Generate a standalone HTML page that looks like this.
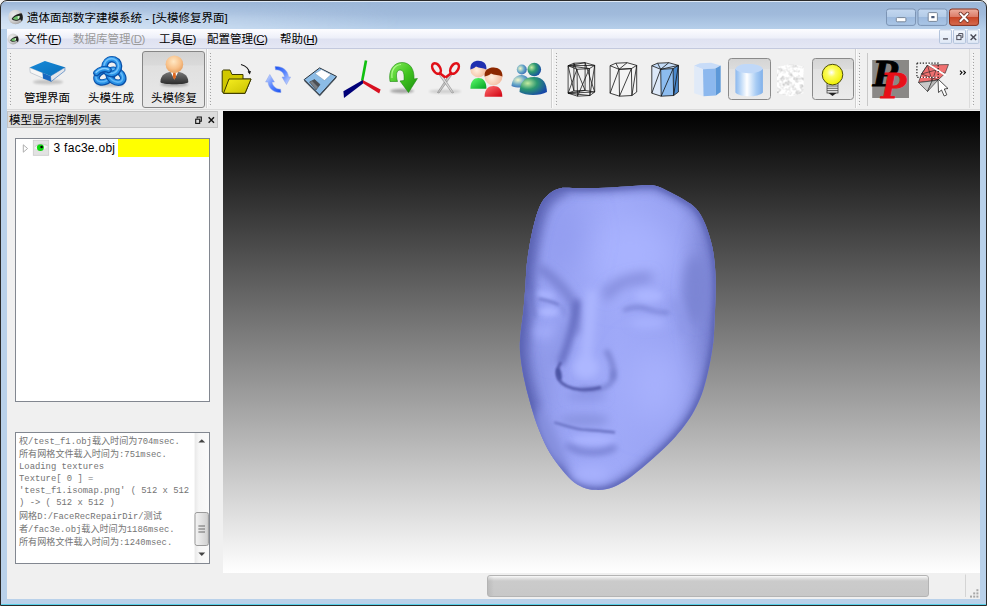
<!DOCTYPE html>
<html lang="zh-CN">
<head>
<meta charset="utf-8">
<title>遗体面部数字建模系统 - [头模修复界面]</title>
<style>
html,body{margin:0;padding:0;}
body{width:987px;height:606px;overflow:hidden;position:relative;background:#000;
  font-family:"Liberation Sans","Noto Sans CJK SC",sans-serif;font-size:11.5px;color:#000;}
.abs{position:absolute;}
#win{position:absolute;left:0;top:0;width:987px;height:606px;background:#f2f2f2;overflow:hidden;}
#frame{position:absolute;left:0;top:0;width:985px;height:604px;border:1px solid #2a2a2a;border-radius:7px 7px 0 0;
  background:linear-gradient(#dfe9f5 0,#dfe9f5 1px,#9cb7d8 1px,#a0badb 13px,#b6cfea 28px,#b9d1ea 48px);}
#frame:before{content:"";position:absolute;left:0;top:1px;width:420px;height:27px;
  background:linear-gradient(rgba(212,227,244,0) 0,rgba(212,227,244,.35) 8px,rgba(212,227,244,.8) 16px,rgba(214,229,245,1) 27px);-webkit-mask-image:linear-gradient(90deg,#000 0,#000 60px,transparent 400px);mask-image:linear-gradient(90deg,#000 0,#000 60px,transparent 400px);}
#frame:after{content:"";position:absolute;left:0;bottom:0;width:985px;height:1px;background:#58d0e8;}
#title{position:absolute;left:27px;top:10px;line-height:17px;font-size:11.5px;white-space:nowrap;color:#000;}
#menubar{position:absolute;left:7px;top:29px;width:973px;height:19px;background:linear-gradient(#fdfdff 0,#eef0f9 45%,#dfe2f1 55%,#e4e7f4 100%);border-bottom:1px solid #c3c9dd;}
.mi{position:absolute;top:30px;line-height:19px;white-space:nowrap;font-size:11.5px;}
.mi u{text-decoration:underline;}
.pa{letter-spacing:-0.55px;}
#client{position:absolute;left:7px;top:49px;width:973px;height:550px;background:#f0f0f0;}
#toolbar{position:absolute;left:7px;top:49px;width:973px;height:60px;background:#f0f0f0;border-bottom:1px solid #dadada;}
.tlabel{position:absolute;top:90.7px;line-height:15px;font-size:11.5px;white-space:nowrap;}
.handle{position:absolute;top:53px;width:1px;height:53px;background:repeating-linear-gradient(#a4a4a4 0 1px,transparent 1px 3px);}
.handle:after{content:"";position:absolute;left:-1px;top:1px;width:1px;height:53px;background:repeating-linear-gradient(#fafafa 0 1px,transparent 1px 3px);}
.pressed{position:absolute;border:1px solid #868686;border-radius:3px;background:linear-gradient(#d2d2d2 0,#dadada 24%,#e0e0e0 25%,#e9e9e9 100%);box-sizing:border-box;}
#docktitle{position:absolute;left:7px;top:111px;width:211px;height:17px;background:#dcdcdc;border:1px solid #c4c4c4;box-sizing:border-box;}
#docktitle span{position:absolute;left:1px;top:1px;line-height:15px;font-size:11.5px;white-space:nowrap;}
#tree{position:absolute;left:15px;top:138px;width:195px;height:264px;background:#fff;border:1px solid #828790;box-sizing:border-box;}
#log{position:absolute;left:15px;top:432px;width:195px;height:132px;background:#fff;border:1px solid #828790;box-sizing:border-box;overflow:hidden;}
.ll{position:absolute;left:19px;line-height:12px;height:12px;font-family:"Liberation Mono","Noto Sans CJK SC",monospace;font-size:8.87px;color:#747474;white-space:pre;}
.ll i{font-style:normal;font-size:9.1px;}
#treerow{position:absolute;left:53.5px;top:139px;line-height:18px;font-size:12px;letter-spacing:0.28px;white-space:nowrap;}
#yellow{position:absolute;left:118px;top:139px;width:91px;height:18px;background:#ffff00;}
#view{position:absolute;left:223px;top:111px;width:757px;height:462px;background:linear-gradient(#000 0%,#fff 100%);overflow:hidden;}
#status{position:absolute;left:7px;top:573px;width:973px;height:26px;background:#f0f0f0;}
#progress{position:absolute;left:487px;top:575px;width:442px;height:22px;box-sizing:border-box;border:1px solid #b4b4b4;border-radius:3px;background:linear-gradient(90deg,rgba(0,0,0,.07) 0,rgba(0,0,0,0) 6px),linear-gradient(#fafafa 0,#e4e4e4 2px,#cbcbcb 5px,#c8c8c8 100%);}
</style>
</head>
<body>
<div id="win">
  <div id="frame"></div>
  <div id="title">遗体面部数字建模系统 - [头模修复界面]</div>
  <div id="menubar"></div>
  <div class="mi" style="left:25px">文件<span class="pa">(<u>F</u>)</span></div>
  <div class="mi" style="left:73px;color:#9a9a9a">数据库管理<span class="pa">(<u>D</u>)</span></div>
  <div class="mi" style="left:159px">工具<span class="pa">(<u>E</u>)</span></div>
  <div class="mi" style="left:207px">配置管理<span class="pa">(<u>C</u>)</span></div>
  <div class="mi" style="left:280px">帮助<span class="pa">(<u>H</u>)</span></div>
  <!--CHR--><svg class="abs" style="left:0;top:0" width="987" height="49" viewBox="0 0 987 49">
<defs>
<linearGradient id="gcb" x1="0" y1="0" x2="0" y2="1"><stop offset="0" stop-color="#c4d8f0"/><stop offset="0.48" stop-color="#b4cce8"/><stop offset="0.5" stop-color="#9dbade"/><stop offset="1" stop-color="#aac6e6"/></linearGradient>
<linearGradient id="gcr" x1="0" y1="0" x2="0" y2="1"><stop offset="0" stop-color="#eeb0a0"/><stop offset="0.48" stop-color="#dc7c68"/><stop offset="0.5" stop-color="#c84424"/><stop offset="1" stop-color="#d66c50"/></linearGradient>
<radialGradient id="geyebg" cx="0.35" cy="0.35" r="0.75"><stop offset="0" stop-color="#ececec"/><stop offset="0.6" stop-color="#cfcfcf"/><stop offset="1" stop-color="#9a9a9a"/></radialGradient>
<linearGradient id="gmdi" x1="0" y1="0" x2="0" y2="1"><stop offset="0" stop-color="#f4f8fd"/><stop offset="1" stop-color="#dfe8f6"/></linearGradient>
</defs>
<!-- title icon -->
<g id="eyeicon">
<circle cx="15.6" cy="17" r="7.3" fill="url(#geyebg)"/>
<path d="M11.6,19 C13,16 17,13.6 21.6,13.2 C23.2,15.5 23.3,19.5 21.8,21.8 C21.6,20.5 21,19.6 20,19.4 C17.5,21.2 13.6,21.2 11.6,19Z" fill="#1e1e1e"/>
<path d="M12.8,18.8 C14.2,16.8 17,15.6 19.6,15.8 C19.8,17.4 19.2,18.8 18.2,19.6 C16.4,20.2 14.2,19.9 12.8,18.8Z" fill="#6cbc68"/>
<path d="M17.8,16.2 C18.6,16 19.2,16 19.6,16.2 C19.6,17.4 19.2,18.4 18.4,19.2 C17.6,18.4 17.4,17.2 17.8,16.2Z" fill="#d8ecd4"/>
</g>
<!-- caption buttons -->
<rect x="886.5" y="9" width="29" height="16.4" rx="2.5" fill="url(#gcb)" stroke="#7c94b4" stroke-width="1"/>
<rect x="896.3" y="17.6" width="9.6" height="4.2" rx="1" fill="#fff" stroke="#6c7c90" stroke-width="0.9"/>
<rect x="918" y="9" width="29" height="16.4" rx="2.5" fill="url(#gcb)" stroke="#7c94b4" stroke-width="1"/>
<rect x="928.2" y="12.6" width="9.2" height="8.8" rx="1" fill="#fff" stroke="#6c7c90" stroke-width="0.9"/>
<rect x="931.3" y="16" width="3.2" height="2.2" fill="#4a5a78"/>
<rect x="949.5" y="9" width="29" height="16.4" rx="2.5" fill="url(#gcr)" stroke="#86301c" stroke-width="1"/>
<path d="M960.4,13.6 L967.6,21 M967.6,13.6 L960.4,21" stroke="#74382c" stroke-width="3.6" stroke-linecap="round"/>
<path d="M960.4,13.6 L967.6,21 M967.6,13.6 L960.4,21" stroke="#fff" stroke-width="2" stroke-linecap="round"/>
<!-- MDI buttons -->
<rect x="939.5" y="29.8" width="12" height="13.6" rx="1" fill="url(#gmdi)" stroke="#b4c4dc" stroke-width="1"/>
<rect x="953.5" y="29.8" width="12" height="13.6" rx="1" fill="url(#gmdi)" stroke="#b4c4dc" stroke-width="1"/>
<rect x="967.2" y="29.8" width="11.6" height="13.6" rx="1" fill="url(#gmdi)" stroke="#b4c4dc" stroke-width="1"/>
<path d="M943,38.9 H948" stroke="#4a4a55" stroke-width="1.3"/>
<path d="M958.8,35.2 V33.6 H962.8 V37.4 H961.4" fill="none" stroke="#4a4a55" stroke-width="1"/>
<rect x="956.8" y="35.6" width="4.2" height="4" fill="none" stroke="#4a4a55" stroke-width="1"/>
<path d="M970.6,34.4 L976.2,40 M976.2,34.4 L970.6,40" stroke="#4a4a55" stroke-width="1.4"/>
<!-- menu icon -->
<g transform="translate(1.4,26.25) scale(0.75)"><use href="#eyeicon"/></g>
</svg>
<!--/CHR-->
  <div id="client"></div>
  <div id="toolbar"></div>
  <div class="handle" style="left:10px"></div>
  <div class="handle" style="left:210px"></div>
  <div class="handle" style="left:556px"></div>
  <div class="handle" style="left:859px"></div>
  <div class="handle" style="left:973px"></div>
  <div class="pressed" style="left:142px;top:51px;width:63px;height:57px"></div>
  <!--IC1--><svg class="abs" style="left:0;top:49px" width="987" height="60" viewBox="0 49 987 60">
<defs>
<filter id="ib1" x="-30%" y="-30%" width="160%" height="160%"><feGaussianBlur stdDeviation="1"/></filter>
<filter id="ib2" x="-30%" y="-30%" width="160%" height="160%"><feGaussianBlur stdDeviation="0.6"/></filter>
<linearGradient id="gbook" x1="0" y1="0" x2="1" y2="1"><stop offset="0" stop-color="#1a8ad8"/><stop offset="1" stop-color="#0870bc"/></linearGradient>
<radialGradient id="ghead" cx="0.45" cy="0.35" r="0.7"><stop offset="0" stop-color="#ffe8c4"/><stop offset="0.6" stop-color="#f8c088"/><stop offset="1" stop-color="#e09858"/></radialGradient>
<linearGradient id="gsuit" x1="0" y1="0" x2="0" y2="1"><stop offset="0" stop-color="#7a7a7a"/><stop offset="1" stop-color="#2c2c2c"/></linearGradient>
<linearGradient id="gknot" x1="0" y1="0" x2="1" y2="1"><stop offset="0" stop-color="#48b0f4"/><stop offset="1" stop-color="#0c5cb4"/></linearGradient>
</defs>
<!-- book -->
<ellipse cx="48" cy="82" rx="15" ry="2.5" fill="#000" opacity="0.18" filter="url(#ib1)"/>
<polygon points="29.7,67.6 50.5,76 51,81.6 30.3,72.6" fill="#f6f6f6" stroke="#9aa6b4" stroke-width="0.5"/>
<polygon points="50.5,76 64.9,67.3 64.9,70.8 51,81.6" fill="#e4e6ea" stroke="#2a6cb8" stroke-width="0.6"/>
<polygon points="42.5,72.8 50.5,76 51,81.6 43,78.4" fill="#1868c0"/>
<polygon points="29.7,67.6 44.9,61 64.9,67.3 50.5,76" fill="url(#gbook)"/>
<!-- trefoil knot -->
<ellipse cx="110" cy="85" rx="14" ry="1.8" fill="#000" opacity="0.2" filter="url(#ib1)"/>
<g fill="none" stroke-linecap="round">
  <ellipse cx="104.5" cy="76.3" rx="8.4" ry="5.6" stroke="#0a50a8" stroke-width="6.6" transform="rotate(-25 104.5 76.3)"/>
  <ellipse cx="104.3" cy="76" rx="8.4" ry="5.6" stroke="#2890e4" stroke-width="4.4" transform="rotate(-25 104.3 76)"/>
  <ellipse cx="104" cy="75.6" rx="8.4" ry="5.6" stroke="#62b8f8" stroke-width="1.6" transform="rotate(-25 104 75.6)"/>
  <ellipse cx="116" cy="76.3" rx="8" ry="5.6" stroke="#0a50a8" stroke-width="6.6" transform="rotate(35 116 76.3)"/>
  <ellipse cx="115.8" cy="76" rx="8" ry="5.6" stroke="#2890e4" stroke-width="4.4" transform="rotate(35 115.8 76)"/>
  <ellipse cx="115.5" cy="75.6" rx="8" ry="5.6" stroke="#62b8f8" stroke-width="1.6" transform="rotate(35 115.5 75.6)"/>
  <ellipse cx="111.8" cy="66.6" rx="7.2" ry="7.4" stroke="#0a50a8" stroke-width="6.6" transform="rotate(20 111.8 66.6)"/>
  <ellipse cx="111.6" cy="66.3" rx="7.2" ry="7.4" stroke="#2c94e8" stroke-width="4.4" transform="rotate(20 111.6 66.3)"/>
  <ellipse cx="111.3" cy="66" rx="7.2" ry="7.4" stroke="#70c0fa" stroke-width="1.6" transform="rotate(20 111.3 66)"/>
  <path d="M96.5,73 A8.4,5.6 -25 0 1 108.5,70" stroke="#0a50a8" stroke-width="6.6"/>
  <path d="M96.4,72.7 A8.4,5.6 -25 0 1 108.4,69.7" stroke="#2890e4" stroke-width="4.4"/>
  <path d="M96.2,72.3 A8.4,5.6 -25 0 1 108.2,69.3" stroke="#8cd0ff" stroke-width="1.6"/>
</g>
<!-- person -->
<ellipse cx="174.4" cy="84.5" rx="14" ry="2" fill="#000" opacity="0.25" filter="url(#ib1)"/>
<path d="M160.4,82 C160.4,75 166,71.5 174.4,71.5 C182.8,71.5 188.3,75 188.3,82 C188.3,85 160.4,85 160.4,82Z" fill="url(#gsuit)"/>
<polygon points="170.5,71.8 178.3,71.8 174.4,79.5" fill="#fff"/>
<polygon points="173.2,72.5 175.6,72.5 176,77 174.4,79.8 172.8,77" fill="#e06820"/>
<circle cx="174.4" cy="64.2" r="8.8" fill="url(#ghead)"/>
</svg>
<!--/IC1-->
<!--IC2--><svg class="abs" style="left:0;top:49px" width="987" height="60" viewBox="0 49 987 60">
<defs>
<linearGradient id="gfold" x1="0" y1="0" x2="1" y2="1"><stop offset="0" stop-color="#f8f020"/><stop offset="1" stop-color="#c8c000"/></linearGradient>
<linearGradient id="grf1" x1="0" y1="0" x2="1" y2="1"><stop offset="0" stop-color="#1850f0"/><stop offset="0.5" stop-color="#5c88ff"/><stop offset="1" stop-color="#dce6ff"/></linearGradient>
<linearGradient id="grf2" x1="1" y1="1" x2="0" y2="0"><stop offset="0" stop-color="#1850f0"/><stop offset="0.5" stop-color="#5c88ff"/><stop offset="1" stop-color="#dce6ff"/></linearGradient>
<linearGradient id="ggrn" x1="0" y1="0" x2="1" y2="1"><stop offset="0" stop-color="#8cf060"/><stop offset="0.5" stop-color="#40c420"/><stop offset="1" stop-color="#1c9010"/></linearGradient>
<radialGradient id="gskin" cx="0.4" cy="0.55" r="0.7"><stop offset="0" stop-color="#fff0e0"/><stop offset="1" stop-color="#f0b090"/></radialGradient>
<linearGradient id="gbodyg" x1="0" y1="0" x2="1" y2="1"><stop offset="0" stop-color="#60ff70"/><stop offset="1" stop-color="#00a020"/></linearGradient>
<linearGradient id="gbodyr" x1="0" y1="0" x2="1" y2="1"><stop offset="0" stop-color="#ff7070"/><stop offset="1" stop-color="#d00010"/></linearGradient>
<radialGradient id="gmsn" cx="0.3" cy="0.35" r="0.75"><stop offset="0" stop-color="#c4eca0"/><stop offset="0.45" stop-color="#2c9870"/><stop offset="1" stop-color="#1848a8"/></radialGradient>
<radialGradient id="gmsn2" cx="0.35" cy="0.4" r="0.75"><stop offset="0" stop-color="#f4f8c8"/><stop offset="0.5" stop-color="#68a8c8"/><stop offset="1" stop-color="#2858b0"/></radialGradient>
</defs>
<!-- folder -->
<path d="M222.2,71 L222.2,92 L224,93.5 L245,93.5 L251,79 L243,79 L243,74.5 L232,74.5 L230,70 L223.5,70Z" fill="#d0c800" stroke="#3c3a00" stroke-width="1" stroke-linejoin="round"/>
<path d="M223.5,93.3 L229,79 L251,79 L245,93.3Z" fill="url(#gfold)" stroke="#3c3a00" stroke-width="1" stroke-linejoin="round"/>
<path d="M241,64.5 C246,66 249,69 249.5,73" fill="none" stroke="#111" stroke-width="1.1"/>
<polygon points="247.6,71.5 251,71 249.8,74.6" fill="#111"/>
<!-- refresh -->
<path d="M275,66.5 C282,66 288,70 288.5,77 L290.6,77 L286.5,84.5 L282,77 L284.5,77 C284,72.5 280,69.5 275.5,69.8Z" fill="url(#grf1)" stroke="#88a0e8" stroke-width="0.5"/>
<path d="M281,92.5 C274,93 268.5,88.5 268,82 L265.6,82 L269.8,74.5 L274.4,82 L272,82 C272.5,86 276,89.3 280.6,89.2Z" fill="url(#grf2)" stroke="#88a0e8" stroke-width="0.5"/>
<!-- floppy -->
<polygon points="304.2,79.6 319.6,67.9 336.5,76.4 319.6,95" fill="#8cbce6" stroke="#28323c" stroke-width="1" stroke-linejoin="round"/>
<polygon points="304.2,79.6 319.6,95 319.6,96.2 304.2,81" fill="#3c4650"/>
<polygon points="319.6,95 336.5,76.4 336.5,77.8 319.6,96.4" fill="#3c4650"/>
<polygon points="315,73.5 321.5,69.5 331,74.5 324.5,80.5" fill="#fff" stroke="#6080a0" stroke-width="0.4"/>
<polygon points="309.5,82 314.5,79.5 320,84.5 316,90" fill="#7a7e84" stroke="#333" stroke-width="0.5"/>
<polygon points="312,81 314.5,79.5 320,84.5 318,87" fill="#4a4e54"/>
<!-- axes -->
<path d="M362.2,80.8 L366,60.4" stroke="#10c010" stroke-width="2.6" stroke-linecap="butt"/>
<polygon points="362.6,80 380.6,89.5 379.2,93.5 361.4,82.2" fill="#d81020"/>
<polygon points="362.8,80 363,83.5 344,98 343.4,91.2" fill="#000078"/>
<!-- green arrow -->
<ellipse cx="402" cy="91" rx="12" ry="2.2" fill="#000" opacity="0.3" filter="url(#ib1)"/>
<path d="M390,81.5 C388,70 394,62.5 402,62.5 C410,62.5 414.5,69 414,79 L417.4,78.5 L408.5,92.5 L400,81 L404,80.5 C404.5,74 403.5,70 400,70 C396.5,70 395.5,75 397.5,81.5Z" fill="url(#ggrn)" stroke="#1c8810" stroke-width="0.6"/>
<path d="M392,78 C391,70 395,65 401,64.5" fill="none" stroke="#c0ffa0" stroke-width="1.2" opacity="0.8"/>
<!-- scissors -->
<ellipse cx="445" cy="91.5" rx="16" ry="2" fill="#000" opacity="0.13" filter="url(#ib1)"/>
<path d="M437.5,92.5 L450.5,72.5 L452.5,74 L439,93Z" fill="#c8c8c8" stroke="#707070" stroke-width="0.5"/>
<path d="M453.5,92.5 L440.5,72.5 L438.5,74 L452,93Z" fill="#dcdcdc" stroke="#707070" stroke-width="0.5"/>
<ellipse cx="436.5" cy="68.5" rx="3.6" ry="5.8" fill="none" stroke="#e01018" stroke-width="2.6" transform="rotate(-32 436.5 68.5)"/>
<ellipse cx="454.5" cy="68.5" rx="3.6" ry="5.8" fill="none" stroke="#e01018" stroke-width="2.6" transform="rotate(32 454.5 68.5)"/>
<path d="M439.5,73 L445.5,77.5 M451.5,73 L445.5,77.5" stroke="#e01018" stroke-width="2.6" fill="none"/>
<!-- users -->
<path d="M470.4,88.8 C470.4,81 474,78 478.4,78 C483,78 486.4,81 486.4,88.8Z" fill="url(#gbodyg)"/>
<circle cx="478.4" cy="69.4" r="8" fill="url(#gskin)"/>
<path d="M470.4,69.5 C470,63 474,60.8 478.4,60.8 C483,60.8 487,63.5 486.4,69.5 C483,67.5 479,68.5 476,66.5 C474,68.5 472,69 470.4,69.5Z" fill="#2030b0"/>
<path d="M484.6,96.8 C484.6,89 488.5,86 493.5,86 C498.5,86 502.3,89 502.3,96.8Z" fill="url(#gbodyr)"/>
<circle cx="493.5" cy="76.5" r="8.9" fill="url(#gskin)"/>
<path d="M484.6,76.5 C484,70 488.5,67.4 493.5,67.4 C498.5,67.4 503,70.5 502.4,76.5 C499,74.5 494,75.5 491,73.5 C489,75.5 487,76 484.6,76.5Z" fill="#8c2800"/>
<!-- msn -->
<path d="M511.5,86 C512,80 515,75 521.5,75 C528,75 529.5,80 530,86 C524,88 516,88 511.5,86Z" fill="url(#gmsn2)"/>
<circle cx="521.8" cy="69.5" r="5" fill="url(#gmsn2)"/>
<path d="M519.5,92 C520,83 524,77 534,77 C544,77 546.5,84 547,92 C540,96 526,96 519.5,92Z" fill="url(#gmsn)"/>
<circle cx="534.3" cy="69.5" r="6.8" fill="url(#gmsn)"/>
</svg>
<!--/IC2-->
<!--IC3--><svg class="abs" style="left:0;top:49px" width="987" height="60" viewBox="0 49 987 60">
<defs>
<linearGradient id="gbtn" x1="0" y1="0" x2="0" y2="1"><stop offset="0" stop-color="#d4d4d4"/><stop offset="0.25" stop-color="#dcdcdc"/><stop offset="0.26" stop-color="#e2e2e2"/><stop offset="1" stop-color="#ebebeb"/></linearGradient>
<linearGradient id="gcyl" x1="0" y1="0" x2="1" y2="0"><stop offset="0" stop-color="#8cb8ee"/><stop offset="0.12" stop-color="#a8ccf4"/><stop offset="0.42" stop-color="#ffffff"/><stop offset="0.75" stop-color="#a8ccf4"/><stop offset="1" stop-color="#80b0ea"/></linearGradient>
<radialGradient id="gbulb" cx="0.45" cy="0.4" r="0.6"><stop offset="0" stop-color="#ffffff"/><stop offset="0.35" stop-color="#fcfc60"/><stop offset="1" stop-color="#f0f000"/></radialGradient>
<filter id="noise" x="0" y="0" width="100%" height="100%"><feTurbulence type="fractalNoise" baseFrequency="0.22" numOctaves="2" seed="7"/><feColorMatrix type="matrix" values="1.1 0 0 0 0.37  1.1 0 0 0 0.37  1.1 0 0 0 0.37  0 0 0 0 1"/><feComposite in2="SourceGraphic" operator="in"/><feGaussianBlur stdDeviation="0.5"/></filter>
</defs>
<path d="M568.1,65.7 L573.9,63.2 M568.1,93.2 L573.9,90.9 M568.1,65.7 L568.1,93.2 M568.1,65.7 L573.9,90.9 M573.9,63.2 L585.1,62.7 M573.9,90.9 L585.1,90.4 M573.9,63.2 L573.9,90.9 M573.9,63.2 L585.1,90.4 M585.1,62.7 L594.7,65.4 M585.1,90.4 L594.7,92.0 M585.1,62.7 L585.1,90.4 M585.1,62.7 L594.7,92.0 M594.7,65.4 L589.4,68.6 M594.7,92.0 L589.9,95.5 M594.7,65.4 L594.7,92.0 M594.7,65.4 L589.9,95.5 M589.4,68.6 L577.0,69.3 M589.9,95.5 L577.5,96.2 M589.4,68.6 L589.9,95.5 M589.4,68.6 L577.5,96.2 M577.0,69.3 L568.1,65.7 M577.5,96.2 L568.1,93.2 M577.0,69.3 L577.5,96.2 M577.0,69.3 L568.1,93.2 M568.1,65.7 L585.1,62.7 M568.1,93.2 L585.1,90.4 M568.1,65.7 L594.7,65.4 M568.1,93.2 L594.7,92.0 M568.1,65.7 L589.4,68.6 M568.1,93.2 L589.9,95.5" fill="none" stroke="#111" stroke-width="0.75"/>
<polygon points="610.1,65.7 615.9,63.2 627.1,62.7 636.7,65.4 636.7,92.0 631.9,95.5 619.5,96.2 610.1,93.2" fill="#f4f4f4"/>
<path d="M610.1,65.7 L615.9,63.2 M615.9,63.2 L627.1,62.7 M627.1,62.7 L636.7,65.4 M636.7,65.4 L631.4,68.6 M631.4,68.6 L619.0,69.3 M619.0,69.3 L610.1,65.7 M610.1,65.7 L610.1,93.2 M636.7,65.4 L636.7,92.0 M631.4,68.6 L631.9,95.5 M619.0,69.3 L619.5,96.2 M636.7,92.0 L631.9,95.5 M631.9,95.5 L619.5,96.2 M619.5,96.2 L610.1,93.2 M619.0,69.3 L610.1,93.2 M631.4,68.6 L619.5,96.2 M636.7,65.4 L631.9,95.5 M619.0,69.3 L627.1,62.7 M619.0,69.3 L631.4,68.6 M619.0,69.3 L615.9,63.2" fill="none" stroke="#111" stroke-width="0.8"/>
<polygon points="651.8,65.7 657.6,63.2 668.8,62.7 678.4,65.4 673.1,68.6 660.7,69.3" fill="#c4dcf8"/>
<polygon points="651.8,65.7 660.7,69.3 661.2,96.2 651.8,93.2" fill="#dce8f8"/>
<polygon points="660.7,69.3 673.1,68.6 673.6,95.5 661.2,96.2" fill="#8cbcf0"/>
<polygon points="673.1,68.6 678.4,65.4 678.4,92.0 673.6,95.5" fill="#4a88cc"/>
<path d="M651.8,65.7 L657.6,63.2 M657.6,63.2 L668.8,62.7 M668.8,62.7 L678.4,65.4 M678.4,65.4 L673.1,68.6 M673.1,68.6 L660.7,69.3 M660.7,69.3 L651.8,65.7 M651.8,65.7 L651.8,93.2 M678.4,65.4 L678.4,92.0 M673.1,68.6 L673.6,95.5 M660.7,69.3 L661.2,96.2 M678.4,92.0 L673.6,95.5 M673.6,95.5 L661.2,96.2 M661.2,96.2 L651.8,93.2 M660.7,69.3 L651.8,93.2 M673.1,68.6 L661.2,96.2 M678.4,65.4 L673.6,95.5 M660.7,69.3 L668.8,62.7 M660.7,69.3 L657.6,63.2 M660.7,69.3 L678.4,65.4" fill="none" stroke="#111" stroke-width="0.8"/>
<polygon points="694.1,65.7 699.9,63.2 711.1,62.7 720.7,65.4 715.4,68.6 703.0,69.3" fill="#c8dcf8"/>
<polygon points="694.1,65.7 703.0,69.3 703.5,96.2 694.1,93.2" fill="#e0eaf8"/>
<polygon points="703.0,69.3 715.4,68.6 715.9,95.5 703.5,96.2" fill="#8cb8ee"/>
<polygon points="715.4,68.6 720.7,65.4 720.7,92.0 715.9,95.5" fill="#5c98d8"/>
<!-- pressed cylinder button -->
<rect x="728.5" y="58.5" width="42" height="41" rx="3" fill="url(#gbtn)" stroke="#8a8a8a" stroke-width="1"/>
<path d="M735.4,69 L735.4,92.5 C740,97.5 758,97.8 762.9,92.5 L762.9,69Z" fill="url(#gcyl)"/>
<path d="M735.4,69 C737,64.5 744,63.5 749,64 C756,64 762,65.5 762.9,69 C760,72.5 752,73.5 748,73.2 C742,73 737,71.5 735.4,69Z" fill="#c0d8f8"/>
<!-- disabled texture icon -->
<path d="M777,67 L790,64 L803.6,66 L803.6,93 L790,96.5 L777,93Z" fill="#000" filter="url(#noise)"/>
<!-- pressed bulb button -->
<rect x="812.5" y="58.5" width="41" height="41" rx="3" fill="url(#gbtn)" stroke="#8a8a8a" stroke-width="1"/>
<rect x="827" y="83.5" width="11" height="9.5" fill="#e8e8e8" stroke="#333" stroke-width="0.7"/>
<path d="M827,86 H838 M827,88.3 H838 M827,90.6 H838" stroke="#444" stroke-width="0.8"/>
<path d="M828.5,93 L832.5,96 L836.5,93Z" fill="#222"/>
<circle cx="832.5" cy="74.6" r="10.3" fill="url(#gbulb)" stroke="#3c3c00" stroke-width="0.9"/>
<!-- separators -->
<path d="M206.5,49 V108 M551.5,49 V108 M855.5,49 V108" stroke="#d0d0d0" stroke-width="1"/><path d="M207.5,49 V108 M552.5,49 V108 M856.5,49 V108" stroke="#fbfbfb" stroke-width="1"/>
<path d="M867.5,53 V106" stroke="#c8c8c8" stroke-width="1"/>
<path d="M969.5,49 V108" stroke="#dcdcdc" stroke-width="1"/>
<!-- PP icon -->
<rect x="872.2" y="60" width="36.8" height="38" fill="#8a8886"/>
<text transform="translate(872.2,86.3) scale(1.13,1)" font-family="Liberation Serif,serif" font-weight="bold" font-style="italic" font-size="37" fill="#000" stroke="#000" stroke-width="0.9">P</text>
<text transform="translate(880.5,98) scale(1.13,1)" font-family="Liberation Serif,serif" font-weight="bold" font-style="italic" font-size="37" fill="#e81018" stroke="#e81018" stroke-width="0.9">P</text>
<!-- selection icon -->
<polygon points="927.5,65 948.5,64.5 945,73.5 936,70" fill="#f07070" stroke="#222" stroke-width="0.6"/>
<polygon points="927.5,65 936,70 945,73.5 938,80 918.5,82.5 921.5,74" fill="#f07070" stroke="#222" stroke-width="0.6"/>
<path d="M921.5,74 L938,80 M927.5,65 L921.5,74 M927.5,65 L932,81 M921.5,74 L936,70 L932,81" fill="none" stroke="#222" stroke-width="0.6"/>
<polygon points="918.5,82.5 932,81 927.5,91.5" fill="#c8c8c8" stroke="#222" stroke-width="0.6"/>
<polygon points="932,81 938,80 927.5,91.5" fill="#b8b8b8" stroke="#222" stroke-width="0.6"/>
<path d="M927,63.5 L946,75.5" stroke="#fff" stroke-width="2"/>
<rect x="916.9" y="63.2" width="21.3" height="14.2" fill="none" stroke="#222" stroke-width="1.2" stroke-dasharray="1.3 1.6"/>
<path d="M921,77.4 H938" stroke="#fff" stroke-width="1.2" stroke-dasharray="1.3 1.6"/>
<polygon points="938,79 938.5,92.5 941.5,90 944.2,96 946.8,94.8 944.3,89 948,88.5" fill="#fff" stroke="#222" stroke-width="0.8" stroke-linejoin="round"/>
<!-- chevron -->
<path d="M960,70.6 L962,72.6 L960,74.6 M963.4,70.6 L965.4,72.6 L963.4,74.6" fill="none" stroke="#000" stroke-width="1.1"/>
</svg>
<!--/IC3-->
  <div class="tlabel" style="left:24px">管理界面</div>
  <div class="tlabel" style="left:88px">头模生成</div>
  <div class="tlabel" style="left:151px">头模修复</div>
  <div id="docktitle"><span>模型显示控制列表</span></div>
  <div id="tree"></div>
  <div id="yellow"></div>
  <div id="treerow">3 fac3e.obj</div>
  <div id="log"></div>
  <div class="ll" style="top:435.8px"><i>权</i>/test_f1.obj<i>载入时间为</i>704msec.</div>
  <div class="ll" style="top:448.7px"><i>所有网格文件载入时间为</i>:751msec.</div>
  <div class="ll" style="top:460.6px">Loading textures</div>
  <div class="ll" style="top:473.2px">Texture[ 0 ] =</div>
  <div class="ll" style="top:485.1px">'test_f1.isomap.png' ( 512 x 512</div>
  <div class="ll" style="top:497.0px">) -&gt; ( 512 x 512 )</div>
  <div class="ll" style="top:510.6px"><i>网格</i>D:/FaceRecRepairDir/<i>测试</i></div>
  <div class="ll" style="top:523.5px"><i>者</i>/fac3e.obj<i>载入时间为</i>1186msec.</div>
  <div class="ll" style="top:536.7px"><i>所有网格文件载入时间为</i>:1240msec.</div>
  <svg class="abs" style="left:0;top:111px" width="223" height="462" viewBox="0 111 223 462">
  <defs><linearGradient id="gth" x1="0" y1="0" x2="1" y2="0"><stop offset="0" stop-color="#f4f4f4"/><stop offset="0.5" stop-color="#e2e2e2"/><stop offset="1" stop-color="#cfcfcf"/></linearGradient>
  <linearGradient id="gtr" x1="0" y1="0" x2="1" y2="0"><stop offset="0" stop-color="#e8e8e8"/><stop offset="0.3" stop-color="#f6f6f6"/><stop offset="1" stop-color="#fafafa"/></linearGradient></defs>
  <!-- dock title buttons -->
  <path d="M197.2,118.6 V117 H201.3 V121.2 H199.8" fill="none" stroke="#111" stroke-width="1.1"/>
  <rect x="195.7" y="119.2" width="4" height="4.2" fill="none" stroke="#111" stroke-width="1.1"/>
  <path d="M208.6,117.2 L214,122.8 M214,117.2 L208.6,122.8" stroke="#111" stroke-width="1.4"/>
  <!-- tree row -->
  <path d="M23.3,144.8 L27.6,148.5 L23.3,152.2Z" fill="#fff" stroke="#a6a6a6" stroke-width="0.9" stroke-linejoin="round"/>
  <rect x="33.3" y="140.3" width="15.4" height="15" fill="#e2e2e2" stroke="#cacaca" stroke-width="0.8"/>
  <path d="M34.5,148 C36.5,144.6 44,144 47.5,146.6 C45,150.6 38,151 34.5,148Z" fill="#f8f8f8"/>
  <circle cx="40.4" cy="147.5" r="3.5" fill="#10d810"/>
  <circle cx="41.6" cy="147" r="1.3" fill="#000"/>
  <path d="M35,146.6 C38,143.6 44,143.4 47.6,145.6" fill="none" stroke="#c0c0c0" stroke-width="0.6"/>
  <!-- scrollbar -->
  <rect x="194.6" y="433" width="14.4" height="130" fill="url(#gtr)"/>
  <path d="M198.4,442.6 L201.8,439.2 L205.2,442.6Z" fill="#444"/>
  <path d="M198.4,552.6 L201.8,556 L205.2,552.6Z" fill="#444"/>
  <rect x="195" y="512.5" width="13.4" height="33" rx="2" fill="url(#gth)" stroke="#9a9a9a" stroke-width="1"/>
  <path d="M198.4,526 H205 M198.4,529 H205 M198.4,532 H205" stroke="#6a6a6a" stroke-width="1"/>
  </svg>
  <div id="view"></div>
<!--FACE--><svg class="abs" style="left:222px;top:111px" width="758" height="462" viewBox="222 111 758 462">
<defs>
<clipPath id="fc"><path d="M559.4,188.4 C564.8,187.2 572.6,188.3 580.0,188.2 C587.4,188.1 596.5,188.1 604.0,187.8 C611.5,187.5 619.1,186.9 625.0,186.5 C630.9,186.1 634.7,185.6 639.6,185.4 C644.5,185.2 650.0,184.8 654.4,185.6 C658.8,186.4 661.3,187.8 666.3,190.2 C671.2,192.5 679.1,196.6 684.1,199.7 C689.1,202.8 692.5,204.6 696.0,208.6 C699.5,212.6 702.3,217.1 705.0,223.5 C707.7,229.9 710.7,239.3 712.4,247.2 C714.1,255.1 714.8,263.1 715.3,271.0 C715.8,278.9 715.6,285.8 715.5,294.7 C715.4,303.6 714.8,316.5 714.4,324.4 C714.0,332.3 714.1,335.0 713.3,341.9 C712.5,348.8 711.0,357.7 709.4,365.6 C707.8,373.5 705.6,382.5 703.4,389.4 C701.2,396.3 698.7,401.8 696.0,407.2 C693.3,412.6 690.6,417.2 687.1,422.1 C683.6,427.1 679.7,431.9 675.2,436.9 C670.8,441.8 665.4,447.1 660.4,451.8 C655.4,456.5 650.5,460.9 645.5,465.1 C640.5,469.3 635.2,473.8 630.7,477.0 C626.2,480.2 622.8,482.4 618.8,484.4 C614.8,486.4 610.9,488.0 606.9,488.9 C602.9,489.8 599.0,490.1 595.0,489.8 C591.0,489.6 587.2,489.0 583.2,487.4 C579.2,485.8 575.3,483.5 571.3,480.0 C567.3,476.5 563.4,471.8 559.4,466.6 C555.4,461.4 551.2,455.7 547.5,448.8 C543.8,441.9 540.1,432.9 537.1,425.0 C534.1,417.1 531.9,409.2 529.7,401.3 C527.5,393.4 525.4,385.4 523.8,377.5 C522.2,369.6 520.8,360.7 520.2,353.8 C519.6,346.9 519.8,343.2 520.3,336.3 C520.8,329.4 522.4,320.5 523.2,312.6 C524.0,304.7 524.6,296.7 525.2,288.8 C525.8,280.9 526.0,272.4 526.7,265.0 C527.5,257.6 528.5,251.1 529.7,244.2 C531.0,237.3 532.5,229.9 534.2,223.5 C535.9,217.1 537.9,210.3 540.1,205.6 C542.3,200.9 544.3,198.1 547.5,195.2 C550.7,192.3 554.0,189.6 559.4,188.4Z"/></clipPath>
<filter id="b1" filterUnits="userSpaceOnUse" x="440" y="120" width="360" height="440"><feGaussianBlur stdDeviation="1.2"/></filter>
<filter id="b2" filterUnits="userSpaceOnUse" x="440" y="120" width="360" height="440"><feGaussianBlur stdDeviation="2.5"/></filter>
<filter id="b15" filterUnits="userSpaceOnUse" x="440" y="120" width="360" height="440"><feGaussianBlur stdDeviation="1.6"/></filter>
<filter id="b3" filterUnits="userSpaceOnUse" x="440" y="120" width="360" height="440"><feGaussianBlur stdDeviation="3"/></filter>
<filter id="b4" filterUnits="userSpaceOnUse" x="440" y="120" width="360" height="440"><feGaussianBlur stdDeviation="4"/></filter>
<filter id="b6" filterUnits="userSpaceOnUse" x="440" y="120" width="360" height="440"><feGaussianBlur stdDeviation="6"/></filter>
<filter id="b10" filterUnits="userSpaceOnUse" x="440" y="120" width="360" height="440"><feGaussianBlur stdDeviation="10"/></filter>
<filter id="b16" filterUnits="userSpaceOnUse" x="440" y="120" width="360" height="440"><feGaussianBlur stdDeviation="16"/></filter>
<linearGradient id="fbase" x1="519" y1="0" x2="716" y2="0" gradientUnits="userSpaceOnUse">
<stop offset="0" stop-color="#8b95e4"/><stop offset="0.1" stop-color="#98a2f2"/><stop offset="0.5" stop-color="#9fa9f8"/><stop offset="0.8" stop-color="#98a2f2"/><stop offset="0.93" stop-color="#8a93e2"/><stop offset="1" stop-color="#7d86d4"/>
</linearGradient>
</defs>
<path d="M559.4,188.4 C564.8,187.2 572.6,188.3 580.0,188.2 C587.4,188.1 596.5,188.1 604.0,187.8 C611.5,187.5 619.1,186.9 625.0,186.5 C630.9,186.1 634.7,185.6 639.6,185.4 C644.5,185.2 650.0,184.8 654.4,185.6 C658.8,186.4 661.3,187.8 666.3,190.2 C671.2,192.5 679.1,196.6 684.1,199.7 C689.1,202.8 692.5,204.6 696.0,208.6 C699.5,212.6 702.3,217.1 705.0,223.5 C707.7,229.9 710.7,239.3 712.4,247.2 C714.1,255.1 714.8,263.1 715.3,271.0 C715.8,278.9 715.6,285.8 715.5,294.7 C715.4,303.6 714.8,316.5 714.4,324.4 C714.0,332.3 714.1,335.0 713.3,341.9 C712.5,348.8 711.0,357.7 709.4,365.6 C707.8,373.5 705.6,382.5 703.4,389.4 C701.2,396.3 698.7,401.8 696.0,407.2 C693.3,412.6 690.6,417.2 687.1,422.1 C683.6,427.1 679.7,431.9 675.2,436.9 C670.8,441.8 665.4,447.1 660.4,451.8 C655.4,456.5 650.5,460.9 645.5,465.1 C640.5,469.3 635.2,473.8 630.7,477.0 C626.2,480.2 622.8,482.4 618.8,484.4 C614.8,486.4 610.9,488.0 606.9,488.9 C602.9,489.8 599.0,490.1 595.0,489.8 C591.0,489.6 587.2,489.0 583.2,487.4 C579.2,485.8 575.3,483.5 571.3,480.0 C567.3,476.5 563.4,471.8 559.4,466.6 C555.4,461.4 551.2,455.7 547.5,448.8 C543.8,441.9 540.1,432.9 537.1,425.0 C534.1,417.1 531.9,409.2 529.7,401.3 C527.5,393.4 525.4,385.4 523.8,377.5 C522.2,369.6 520.8,360.7 520.2,353.8 C519.6,346.9 519.8,343.2 520.3,336.3 C520.8,329.4 522.4,320.5 523.2,312.6 C524.0,304.7 524.6,296.7 525.2,288.8 C525.8,280.9 526.0,272.4 526.7,265.0 C527.5,257.6 528.5,251.1 529.7,244.2 C531.0,237.3 532.5,229.9 534.2,223.5 C535.9,217.1 537.9,210.3 540.1,205.6 C542.3,200.9 544.3,198.1 547.5,195.2 C550.7,192.3 554.0,189.6 559.4,188.4Z" fill="url(#fbase)"/>
<g clip-path="url(#fc)">
  <!-- broad lights / shadows -->
  <ellipse cx="630" cy="255" rx="45" ry="38" fill="#a8b2fe" filter="url(#b16)"/>
  <ellipse cx="560" cy="235" rx="22" ry="40" fill="#939df0" filter="url(#b16)"/>
  <ellipse cx="706" cy="300" rx="12" ry="70" fill="#7f88d8" filter="url(#b10)"/>
  <ellipse cx="655" cy="385" rx="28" ry="38" fill="#a7b1fd" filter="url(#b16)"/>
  <ellipse cx="536" cy="390" rx="14" ry="55" fill="#8a94e4" filter="url(#b10)"/>
  <!-- rim -->
  <path d="M566,186 C552,189 543,198 538,212 C530,235 526,270 524,300 C522,325 520,340 520,352 C521,375 526,395 532,412" fill="none" stroke="#5c64b4" stroke-width="16" filter="url(#b6)"/>
  <path d="M559.4,188.4 C564.8,187.2 572.6,188.3 580.0,188.2 C587.4,188.1 596.5,188.1 604.0,187.8 C611.5,187.5 619.1,186.9 625.0,186.5 C630.9,186.1 634.7,185.6 639.6,185.4 C644.5,185.2 650.0,184.8 654.4,185.6 C658.8,186.4 661.3,187.8 666.3,190.2 C671.2,192.5 679.1,196.6 684.1,199.7 C689.1,202.8 692.5,204.6 696.0,208.6 C699.5,212.6 702.3,217.1 705.0,223.5 C707.7,229.9 710.7,239.3 712.4,247.2 C714.1,255.1 714.8,263.1 715.3,271.0 C715.8,278.9 715.6,285.8 715.5,294.7 C715.4,303.6 714.8,316.5 714.4,324.4 C714.0,332.3 714.1,335.0 713.3,341.9 C712.5,348.8 711.0,357.7 709.4,365.6 C707.8,373.5 705.6,382.5 703.4,389.4 C701.2,396.3 698.7,401.8 696.0,407.2 C693.3,412.6 690.6,417.2 687.1,422.1 C683.6,427.1 679.7,431.9 675.2,436.9 C670.8,441.8 665.4,447.1 660.4,451.8 C655.4,456.5 650.5,460.9 645.5,465.1 C640.5,469.3 635.2,473.8 630.7,477.0 C626.2,480.2 622.8,482.4 618.8,484.4 C614.8,486.4 610.9,488.0 606.9,488.9 C602.9,489.8 599.0,490.1 595.0,489.8 C591.0,489.6 587.2,489.0 583.2,487.4 C579.2,485.8 575.3,483.5 571.3,480.0 C567.3,476.5 563.4,471.8 559.4,466.6 C555.4,461.4 551.2,455.7 547.5,448.8 C543.8,441.9 540.1,432.9 537.1,425.0 C534.1,417.1 531.9,409.2 529.7,401.3 C527.5,393.4 525.4,385.4 523.8,377.5 C522.2,369.6 520.8,360.7 520.2,353.8 C519.6,346.9 519.8,343.2 520.3,336.3 C520.8,329.4 522.4,320.5 523.2,312.6 C524.0,304.7 524.6,296.7 525.2,288.8 C525.8,280.9 526.0,272.4 526.7,265.0 C527.5,257.6 528.5,251.1 529.7,244.2 C531.0,237.3 532.5,229.9 534.2,223.5 C535.9,217.1 537.9,210.3 540.1,205.6 C542.3,200.9 544.3,198.1 547.5,195.2 C550.7,192.3 554.0,189.6 559.4,188.4Z" fill="none" stroke="#6a73c4" stroke-width="12" filter="url(#b4)" opacity="0.75"/>
  <path d="M559.4,188.4 C564.8,187.2 572.6,188.3 580.0,188.2 C587.4,188.1 596.5,188.1 604.0,187.8 C611.5,187.5 619.1,186.9 625.0,186.5 C630.9,186.1 634.7,185.6 639.6,185.4 C644.5,185.2 650.0,184.8 654.4,185.6 C658.8,186.4 661.3,187.8 666.3,190.2 C671.2,192.5 679.1,196.6 684.1,199.7 C689.1,202.8 692.5,204.6 696.0,208.6 C699.5,212.6 702.3,217.1 705.0,223.5 C707.7,229.9 710.7,239.3 712.4,247.2 C714.1,255.1 714.8,263.1 715.3,271.0 C715.8,278.9 715.6,285.8 715.5,294.7 C715.4,303.6 714.8,316.5 714.4,324.4 C714.0,332.3 714.1,335.0 713.3,341.9 C712.5,348.8 711.0,357.7 709.4,365.6 C707.8,373.5 705.6,382.5 703.4,389.4 C701.2,396.3 698.7,401.8 696.0,407.2 C693.3,412.6 690.6,417.2 687.1,422.1 C683.6,427.1 679.7,431.9 675.2,436.9 C670.8,441.8 665.4,447.1 660.4,451.8 C655.4,456.5 650.5,460.9 645.5,465.1 C640.5,469.3 635.2,473.8 630.7,477.0 C626.2,480.2 622.8,482.4 618.8,484.4 C614.8,486.4 610.9,488.0 606.9,488.9 C602.9,489.8 599.0,490.1 595.0,489.8 C591.0,489.6 587.2,489.0 583.2,487.4 C579.2,485.8 575.3,483.5 571.3,480.0 C567.3,476.5 563.4,471.8 559.4,466.6 C555.4,461.4 551.2,455.7 547.5,448.8 C543.8,441.9 540.1,432.9 537.1,425.0 C534.1,417.1 531.9,409.2 529.7,401.3 C527.5,393.4 525.4,385.4 523.8,377.5 C522.2,369.6 520.8,360.7 520.2,353.8 C519.6,346.9 519.8,343.2 520.3,336.3 C520.8,329.4 522.4,320.5 523.2,312.6 C524.0,304.7 524.6,296.7 525.2,288.8 C525.8,280.9 526.0,272.4 526.7,265.0 C527.5,257.6 528.5,251.1 529.7,244.2 C531.0,237.3 532.5,229.9 534.2,223.5 C535.9,217.1 537.9,210.3 540.1,205.6 C542.3,200.9 544.3,198.1 547.5,195.2 C550.7,192.3 554.0,189.6 559.4,188.4Z" fill="none" stroke="#555dae" stroke-width="4" filter="url(#b2)"/>
  <!-- right eye -->
  <path d="M605,298 C611,285 628,277.5 652,277.5" fill="none" stroke="#7981d2" stroke-width="8" filter="url(#b6)"/>
  <ellipse cx="696" cy="290" rx="12" ry="34" fill="#7c85d4" filter="url(#b6)"/>
  <path d="M672,300 C680,310 684,322 682,335" fill="none" stroke="#8c96e6" stroke-width="7" filter="url(#b4)"/>
  <ellipse cx="649" cy="296" rx="14" ry="6.5" fill="#abb5ff" filter="url(#b3)"/>
  <path d="M623,310.5 C632,306.5 642,306.5 650,310 C656,312.5 662,313.3 669,312.5" fill="none" stroke="#7079ca" stroke-width="3" filter="url(#b2)"/>
  <ellipse cx="648" cy="323" rx="18" ry="5.5" fill="#a8b2fe" filter="url(#b4)"/>
  <!-- left eye -->
  <path d="M538,267 C552,276 566,290 573,303 C577,312 578,322 577,334" fill="none" stroke="#747dce" stroke-width="8" filter="url(#b4)"/>
  <path d="M526.5,289 C528.5,300 531,308 535.5,317" fill="none" stroke="#727bcc" stroke-width="3" filter="url(#b2)"/>
  <ellipse cx="546" cy="295" rx="9" ry="4" fill="#a8b2fe" filter="url(#b2)" transform="rotate(15 546 295)"/>
  <path d="M538.5,299 Q548,300 559,305" fill="none" stroke="#727bcc" stroke-width="2.6" filter="url(#b15)"/>
  <path d="M560,305 C563,308 565,312 565,317" fill="none" stroke="#7f88d8" stroke-width="3" filter="url(#b2)"/>
  <ellipse cx="549" cy="312" rx="9.5" ry="5" fill="#acb6ff" filter="url(#b2)"/>
  <ellipse cx="546" cy="332" rx="12" ry="6" fill="#a0aaf8" filter="url(#b4)"/>
  <!-- nose -->
  <path d="M569,318 C562,335 556,350 551,366" fill="none" stroke="#8c96e6" stroke-width="10" filter="url(#b6)"/>
  <path d="M577.5,300 C575,322 569,343 560.5,364" fill="none" stroke="#646cc0" stroke-width="7" filter="url(#b3)"/>
  <path d="M592,290 C590,320 587,345 585,372" fill="none" stroke="#adb7ff" stroke-width="11" filter="url(#b4)"/>
  <ellipse cx="586" cy="368" rx="13" ry="11" fill="#adb7ff" filter="url(#b4)"/>
  <path d="M606,350 C612,360 615,370 613,380" fill="none" stroke="#7a83d2" stroke-width="5" filter="url(#b2)"/>
  <ellipse cx="586" cy="396" rx="20" ry="6" fill="#8e98e8" filter="url(#b4)"/>
  <path d="M580,389 C592,390 605,389 610,384 C613,380 614,375 613,370" fill="none" stroke="#717aca" stroke-width="3.5" filter="url(#b2)"/>
  <path d="M561,362 C557,368 556,374 558.5,379 C562,385 570,388.5 580,389.5 C588,390 595,389 601,387.5" fill="none" stroke="#555cac" stroke-width="3" filter="url(#b1)"/>
  <ellipse cx="559" cy="374" rx="2.6" ry="6.5" fill="#4a52a2" filter="url(#b1)" transform="rotate(-12 559 374)"/>
  <!-- mouth -->
  <ellipse cx="584" cy="420" rx="25" ry="6" fill="#8a94e2" filter="url(#b4)"/>
  <ellipse cx="593" cy="440" rx="22" ry="5" fill="#aab4ff" filter="url(#b3)"/>
  <path d="M554,422.5 C564,425 572,428 582,429.5 C595,430.5 605,431 615,432.5" fill="none" stroke="#6d76c6" stroke-width="2.6" filter="url(#b1)"/>
  <path d="M566,445 C578,453 598,456 616,447" fill="none" stroke="#757ecf" stroke-width="5.5" filter="url(#b3)"/>
  <ellipse cx="590" cy="474" rx="20" ry="9" fill="#a7b1fd" filter="url(#b6)"/>
  <ellipse cx="550" cy="440" rx="8" ry="30" fill="#8690de" filter="url(#b6)" transform="rotate(-25 550 440)"/>
</g>
</svg><!--/FACE-->
  <div id="status"></div>
  <div id="progress"></div>
  <svg class="abs" style="left:960px;top:573px" width="20" height="26" viewBox="960 573 20 26">
  <path d="M965.5,574.5 V597" stroke="#d4d4d4" stroke-width="1"/>
  <g fill="#a8a8a8"><rect x="970" y="595.6" width="2" height="2"/><rect x="973.2" y="595.6" width="2" height="2"/><rect x="976.4" y="595.6" width="2" height="2"/><rect x="973.2" y="592.4" width="2" height="2"/><rect x="976.4" y="592.4" width="2" height="2"/><rect x="976.4" y="589.2" width="2" height="2"/></g>
  </svg>
</div>
</body>
</html>
